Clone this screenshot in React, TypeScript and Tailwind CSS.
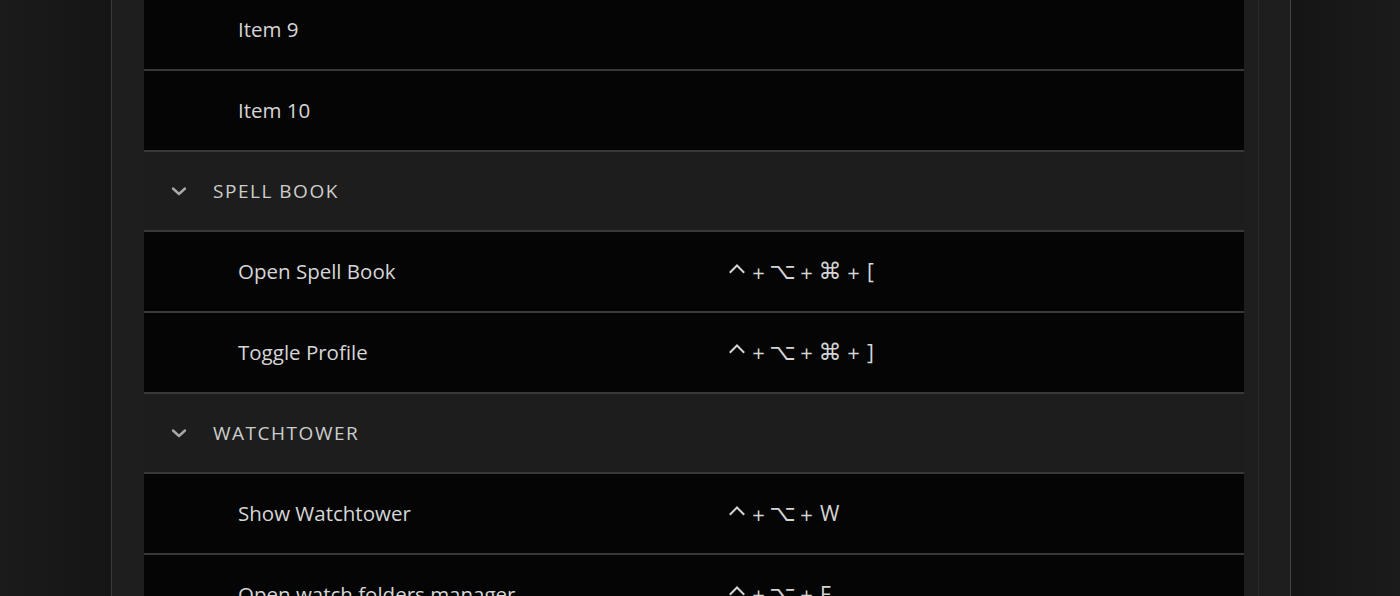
import React from 'react';

type Row =
  | { kind: 'item'; label: string; keys?: string[] }
  | { kind: 'group'; label: string };

const rows: Row[] = [
  { kind: 'item', label: 'Item 9' },
  { kind: 'item', label: 'Item 10' },
  { kind: 'group', label: 'Spell Book' },
  { kind: 'item', label: 'Open Spell Book', keys: ['⌃', '⌥', '⌘', '['] },
  { kind: 'item', label: 'Toggle Profile', keys: ['⌃', '⌥', '⌘', ']'] },
  { kind: 'group', label: 'Watchtower' },
  { kind: 'item', label: 'Show Watchtower', keys: ['⌃', '⌥', 'W'] },
  { kind: 'item', label: 'Open watch folders manager', keys: ['⌃', '⌥', 'F'] },
];

const Chevron = () => (
  <svg width="18" height="12" viewBox="0 0 18 12" fill="none">
    <path d="M3 3.5 L9 9 L15 3.5" stroke="#a8a8a8" strokeWidth="2.4" strokeLinecap="round" strokeLinejoin="round" />
  </svg>
);

// control key caret
const Caret = () => (
  <svg width="16" height="20" viewBox="0 0 16 20" fill="none" className="w-[16px]">
    <path d="M1.5 10 L8 3.5 L14.5 10" stroke="#d4d4d4" strokeWidth="2" strokeLinecap="square" />
  </svg>
);

const symbolWidth: Record<string, string> = {
  '⌥': 'w-[21px]',
  '⌘': 'w-[20px]',
};

const Keys = ({ keys }: { keys: string[] }) => (
  <div className="flex items-center gap-[7px] text-[#d4d4d4]">
    {keys.map((k, i) => (
      <React.Fragment key={i}>
        {i > 0 && <span className="w-[13px] text-center text-[22px] leading-none">+</span>}
        {k === '⌃' ? (
          <Caret />
        ) : symbolWidth[k] ? (
          <span
            className={`${symbolWidth[k]} flex justify-center text-[23px] leading-none`}
            style={{ fontFamily: '"DejaVu Sans", sans-serif' }}
          >
            {k}
          </span>
        ) : (
          <span className="text-[21px]">{k}</span>
        )}
      </React.Fragment>
    ))}
  </div>
);

const App: React.FC = () => {
  return (
    <div
      className="h-[596px] w-[1400px] overflow-hidden bg-[#191919] flex"
      style={{ fontFamily: '"Open Sans", "Noto Sans", sans-serif' }}
    >
      <div className="w-[111px] shrink-0 bg-gradient-to-r from-[#1b1b1b] to-[#151515]" />
      <div className="w-[1px] shrink-0 bg-[#3a3a3a]" />
      {/* panel */}
      <div className="w-[1178px] shrink-0 bg-[#1e1e1e] flex">
        <div className="w-[32px] shrink-0" />
        <div className="w-[1100px] shrink-0 -mt-[9.67px]">
          {rows.map((r, i) =>
            r.kind === 'group' ? (
              <div key={i} className="h-[80.67px] bg-[#1d1d1d] border-b-2 border-[#383838] flex items-center">
                <div className="w-[69px] pl-[26px] flex items-center">
                  <Chevron />
                </div>
                <span className="text-[19px] font-medium uppercase tracking-[0.08em] text-[#cdcdcd]">{r.label}</span>
              </div>
            ) : (
              <div key={i} className="h-[80.67px] bg-[#050505] border-b-2 border-[#383838] flex items-center">
                <span className="w-[585px] pl-[94px] text-[20.5px] text-[#d6d6d6] shrink-0">{r.label}</span>
                {r.keys && <Keys keys={r.keys} />}
              </div>
            )
          )}
        </div>
        <div className="w-[14px] shrink-0 bg-[#1e1e1e]" />
        <div className="w-[1px] shrink-0 bg-[#2a2a2a]" />
        <div className="flex-1" />
      </div>
      <div className="w-[1px] shrink-0 bg-[#444]" />
      <div className="flex-1 bg-gradient-to-r from-[#151515] to-[#1b1b1b]" />
    </div>
  );
};

export default App;
